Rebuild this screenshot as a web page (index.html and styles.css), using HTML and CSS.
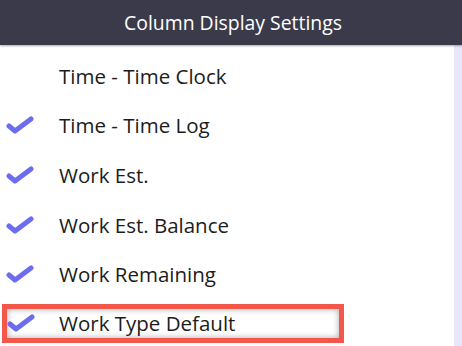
FILE: index.html
```html
<!DOCTYPE html>
<html lang="en">
<head>
  <meta charset="UTF-8">
  <meta name="viewport" content="width=device-width, initial-scale=1.0">
  <title>Column Display Settings</title>
  <link rel="stylesheet" href="styles.css">
</head>
<body>
  <header class="panel-header">Column Display Settings</header>

  <div class="panel-body">
    <ul class="column-list">
      <li class="column-item">
        <span class="check"></span>
        <span class="label">Time - Time Clock</span>
      </li>
      <li class="column-item">
        <span class="check"><svg viewBox="0 0 28 18" width="28" height="18"><path d="M3 10 L9 15 L25 3" /></svg></span>
        <span class="label">Time - Time Log</span>
      </li>
      <li class="column-item">
        <span class="check"><svg viewBox="0 0 28 18" width="28" height="18"><path d="M3 10 L9 15 L25 3" /></svg></span>
        <span class="label">Work Est.</span>
      </li>
      <li class="column-item">
        <span class="check"><svg viewBox="0 0 28 18" width="28" height="18"><path d="M3 10 L9 15 L25 3" /></svg></span>
        <span class="label">Work Est. Balance</span>
      </li>
      <li class="column-item">
        <span class="check"><svg viewBox="0 0 28 18" width="28" height="18"><path d="M3 10 L9 15 L25 3" /></svg></span>
        <span class="label">Work Remaining</span>
      </li>
      <li class="column-item highlighted">
        <span class="check"><svg viewBox="0 0 28 18" width="28" height="18"><path d="M3 10 L9 15 L25 3" /></svg></span>
        <span class="label">Work Type Default</span>
      </li>
    </ul>
    <div class="side-strip"></div>
  </div>
</body>
</html>
```

FILE: styles.css
```css
body {
  margin: 0;
  font-family: "Open Sans", "Noto Sans", sans-serif;
  background-color: #ffffff;
  overflow: hidden;
}
.panel-header {
  height: 45px;
  line-height: 45px;
  background-color: #3b3a4b;
  color: #ffffff;
  font-size: 19.4px;
  text-align: center;
  padding-left: 4px;
  box-shadow: 0 1px 2px rgba(0, 0, 0, 0.35);
  position: relative;
}
.panel-body {
  display: flex;
  height: 301px;
}
.column-list {
  flex: 1;
  list-style: none;
  margin: 0;
  padding: 6px 0 0 0;
}
.column-item {
  display: flex;
  align-items: center;
  height: 49.6px;
  font-size: 20.5px;
  color: #1c1c1c;
  box-sizing: border-box;
}
.check {
  width: 58px;
  padding-left: 6px;
  box-sizing: border-box;
  display: flex;
  align-items: center;
}
.check svg {
  fill: none;
  stroke: #6c6cef;
  stroke-width: 5;
  stroke-linecap: round;
  stroke-linejoin: round;
}
.label {
  padding-left: 1px;
}
.highlighted {
  height: 39px;
  margin: 5px 0 0 2px;
  width: 342px;
  border: 5px solid #f2574a;
  box-shadow: inset 0 0 6px rgba(0, 0, 0, 0.35);
}
.highlighted .check {
  width: 51px;
  padding-left: 0;
}
.side-strip {
  width: 8px;
  background-color: #e7e7fb;
}
```
